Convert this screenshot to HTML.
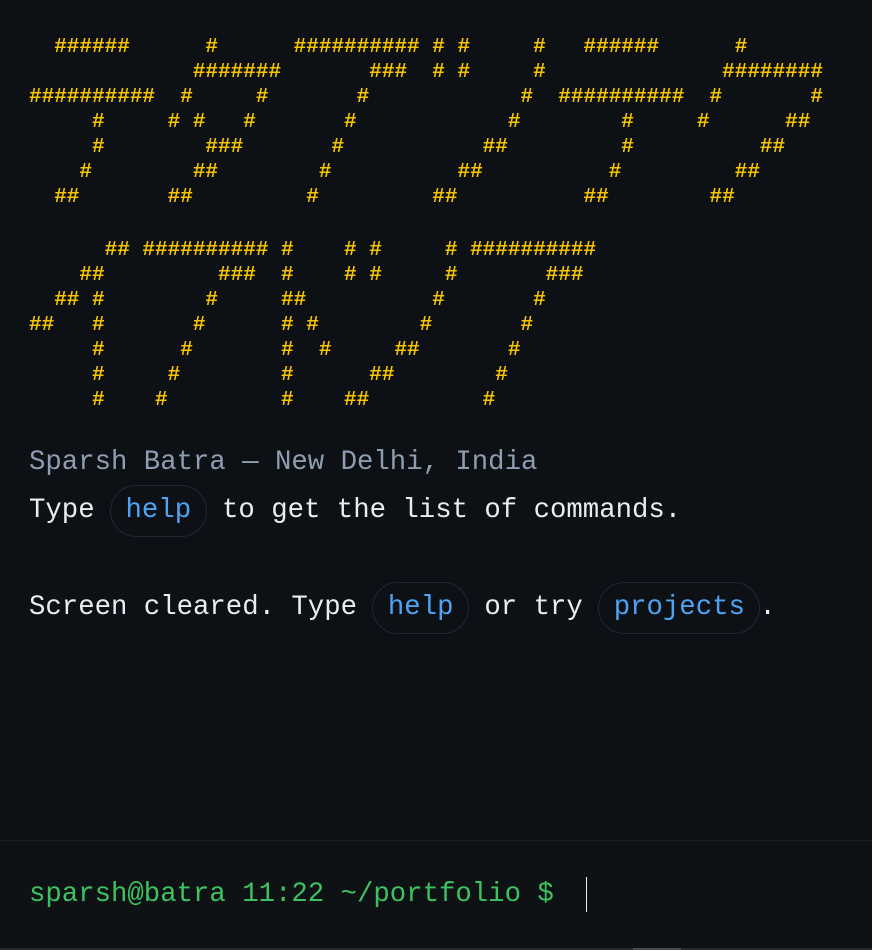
<!DOCTYPE html>
<html><head><meta charset="utf-8"><style>
html,body{margin:0;padding:0;background:#0d1116;width:872px;height:950px;overflow:hidden;}
body{position:relative;font-family:"Liberation Mono","DejaVu Sans Mono",monospace;}
pre.art{position:absolute;left:29px;margin:0;font-family:"Liberation Mono",monospace;font-size:21px;line-height:25px;color:#f6c500;font-weight:bold;white-space:pre;}
.line{position:absolute;left:29px;font-size:27.33px;line-height:40px;white-space:pre;color:#e8edf2;}
.grey{color:#8e9db0;}
.chip{display:inline-block;padding:0 14.5px;border:1px solid #1c2a35;border-radius:26px;color:#4ea4f2;line-height:50px;margin:0 -1px;}
.footer{position:absolute;left:0;top:840px;width:872px;height:108px;background:#0e1215;border-top:1px solid #1c2125;}
.prompt{position:absolute;left:29px;top:34px;font-size:27.33px;line-height:40px;color:#3ec160;white-space:pre;}
.cursor{position:absolute;left:586px;top:36px;width:1px;height:35px;background:#e8edf2;}
.sb{position:absolute;left:0;top:948px;width:872px;height:2px;background:#26292c;}
.thumb{position:absolute;left:633px;top:948px;width:48px;height:2px;background:#4a4d50;}
</style></head><body>
<pre class="art" style="top:35px;">  ######      #      ########## # #     #   ######      #
             #######       ###  # #     #              ########
##########  #     #       #            #  ##########  #       #
     #     # #   #       #            #        #     #      ##
     #        ###       #           ##         #          ##
    #        ##        #          ##          #         ##
  ##       ##         #         ##          ##        ##</pre>
<pre class="art" style="top:238px;">      ## ########## #    # #     # ##########
    ##         ###  #    # #     #       ###
  ## #        #     ##          #       #
##   #       #      # #        #       #
     #      #       #  #     ##       #
     #     #        #      ##        #
     #    #         #    ##         #</pre>
<div class="line grey" style="top:443px;">Sparsh Batra — New Delhi, India</div>
<div class="line" style="top:485px;">Type <span class="chip">help</span> to get the list of commands.</div>
<div class="line" style="top:582px;">Screen cleared. Type <span class="chip">help</span> or try <span class="chip">projects</span>.</div>
<div class="footer">
<div class="prompt">sparsh@batra 11:22 ~/portfolio $</div>
<div class="cursor"></div>
</div>
<div class="sb"></div><div class="thumb"></div>
</body></html>
